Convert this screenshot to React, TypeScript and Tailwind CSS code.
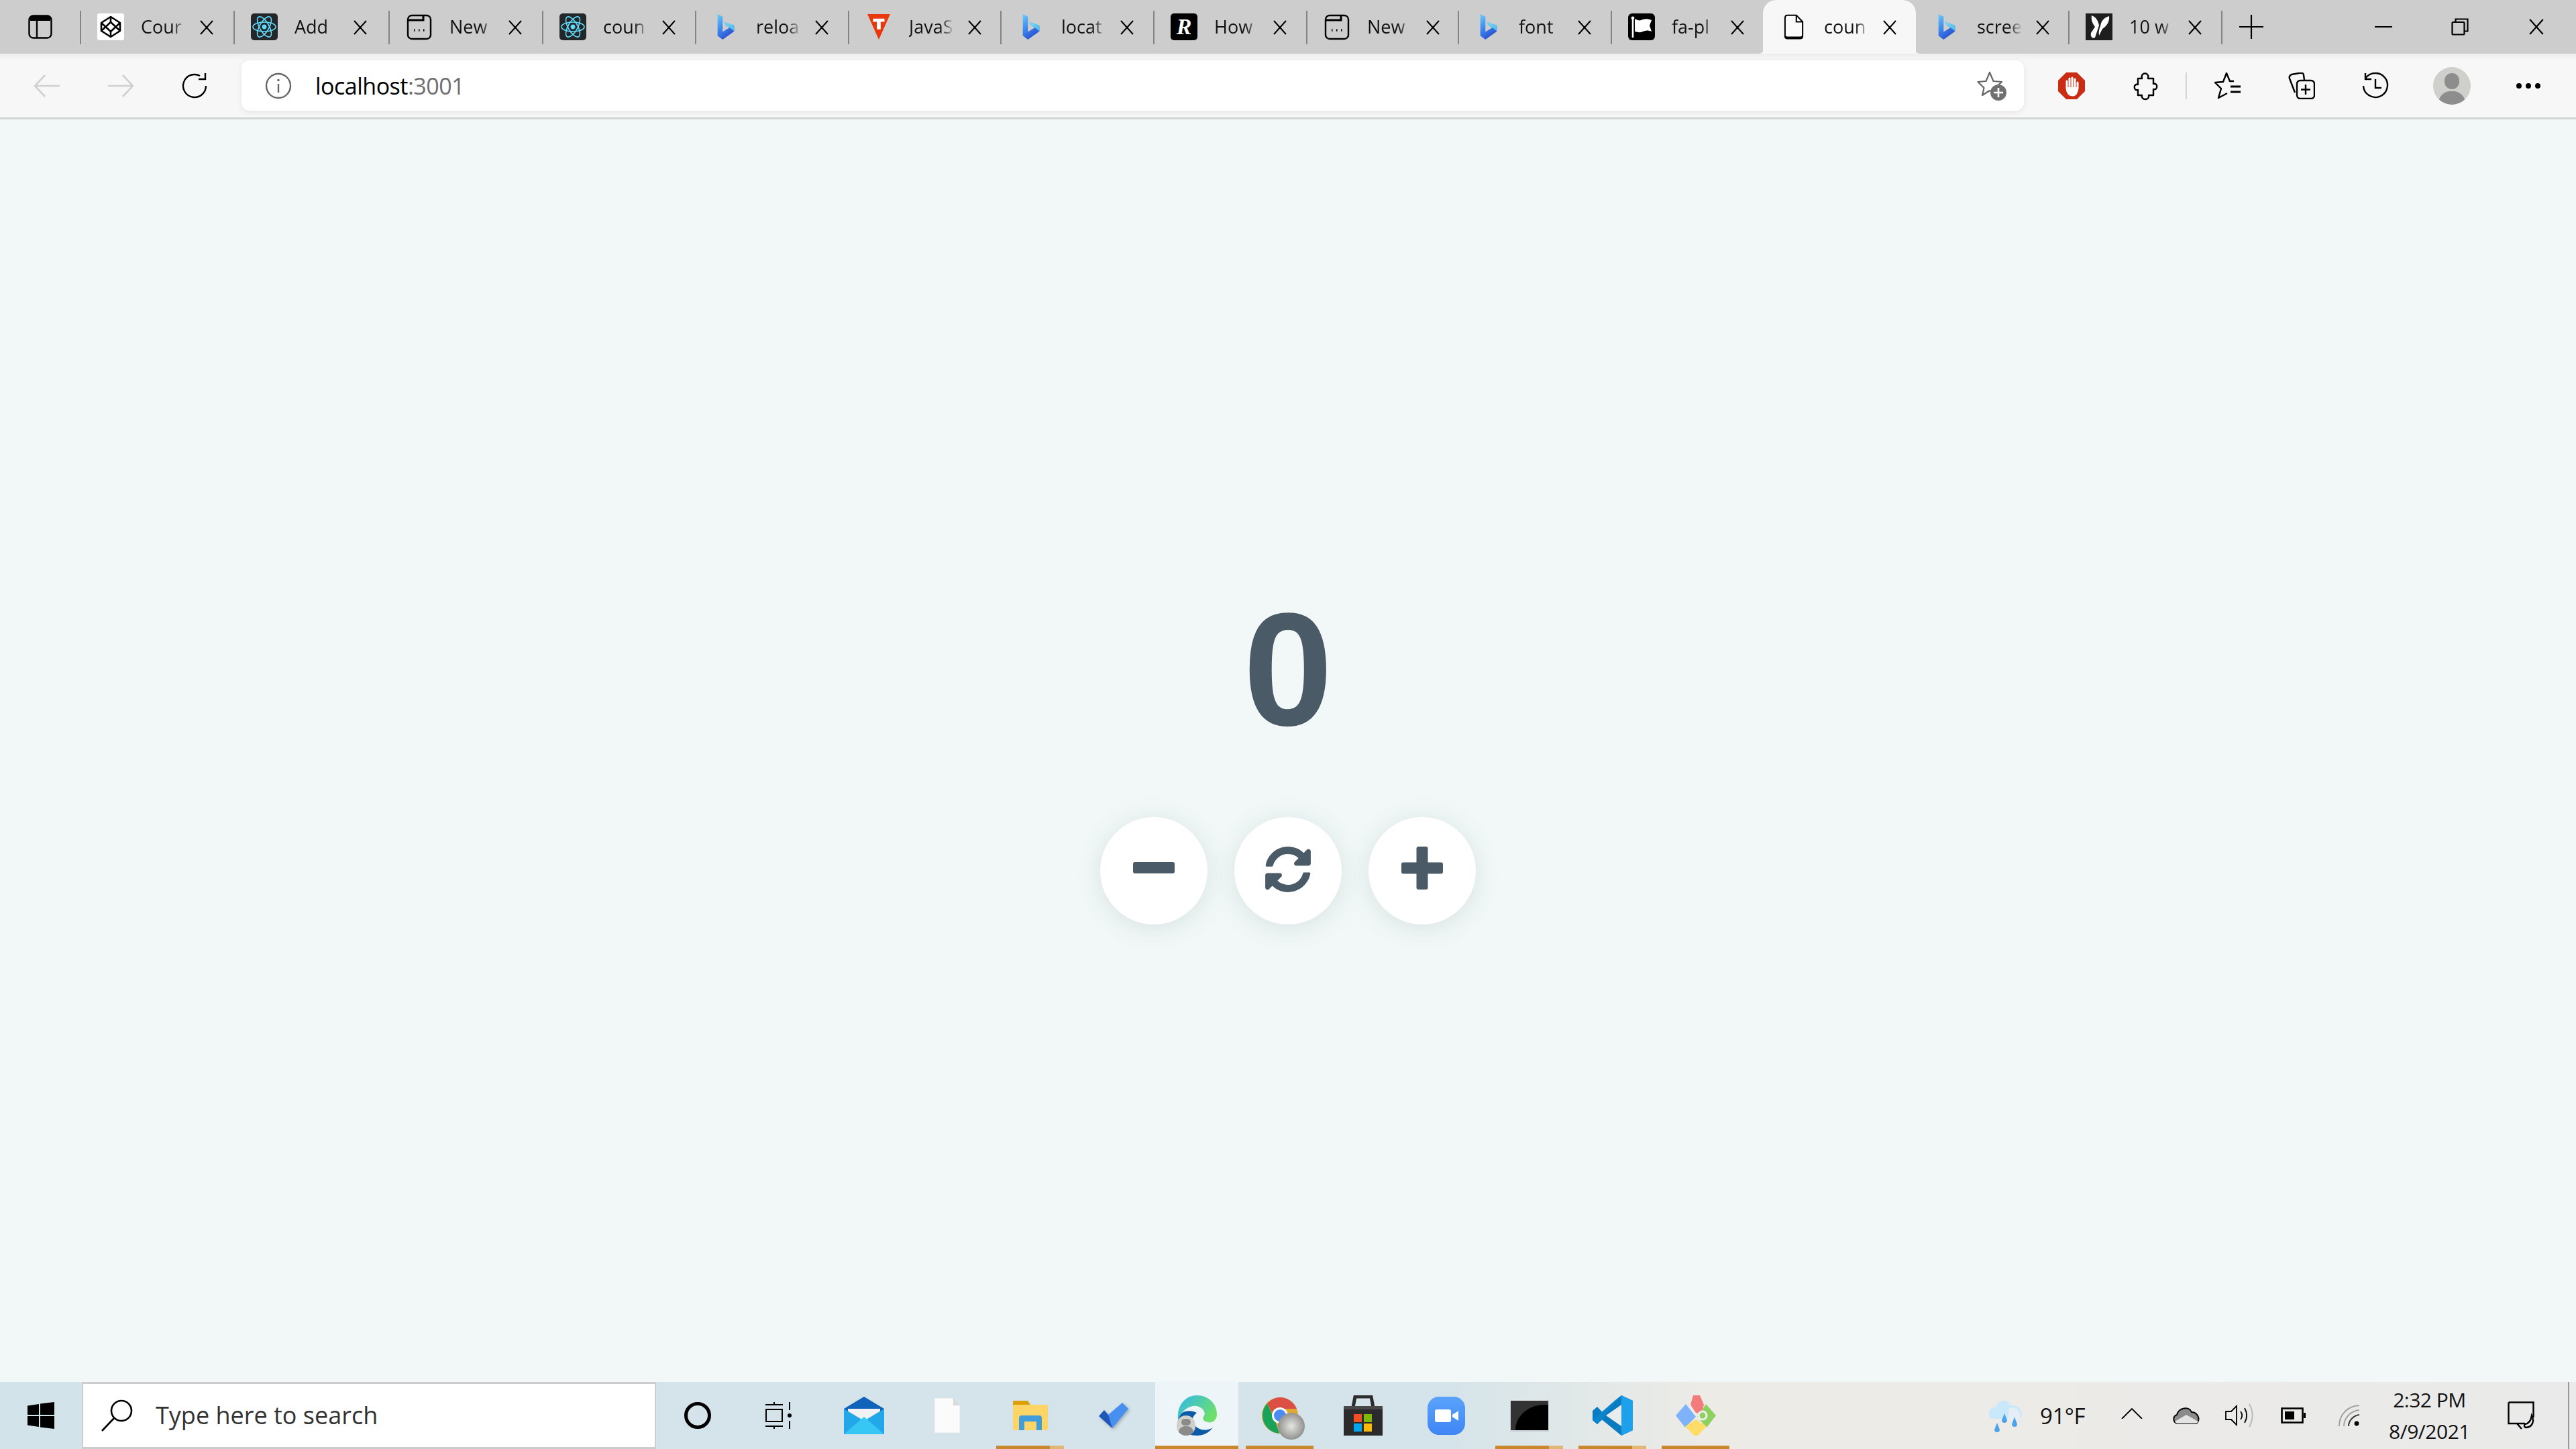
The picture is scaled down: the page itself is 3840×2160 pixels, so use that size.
import { ReactNode } from 'react';
import { FaSyncAlt } from 'react-icons/fa';

const uiFont = "font-['Open_Sans',sans-serif]";

const Bing = () => (
  <svg viewBox="0 0 28 40" className="w-[28px] h-[38px] mx-[6px]">
    <defs>
      <linearGradient id="bing" x1="0" y1="0" x2="0.5" y2="1">
        <stop offset="0" stopColor="#6fcdf7" />
        <stop offset="0.5" stopColor="#3f8bee" />
        <stop offset="1" stopColor="#2a4fd0" />
      </linearGradient>
      <linearGradient id="bingLobe" x1="0" y1="0" x2="1" y2="1">
        <stop offset="0" stopColor="#7fdcf2" />
        <stop offset="1" stopColor="#49b8ec" />
      </linearGradient>
    </defs>
    <path d="M1 0 L9 4 V28 L20 21 L14 18 L11 12 L27 18 V27 L9 40 L1 34 Z" fill="url(#bing)" />
    <path d="M11 12 L27 18 V27 L20 21 L14 18 Z" fill="url(#bingLobe)" />
  </svg>
);

const ReactIcon = () => (
  <svg viewBox="0 0 40 40" className="w-10 h-10">
    <rect width="40" height="40" rx="5" fill="#23272a" />
    <g fill="none" stroke="#61dafb" strokeWidth="1.6">
      <ellipse cx="20" cy="20" rx="17" ry="7" />
      <ellipse cx="20" cy="20" rx="17" ry="7" transform="rotate(60 20 20)" />
      <ellipse cx="20" cy="20" rx="17" ry="7" transform="rotate(120 20 20)" />
    </g>
    <circle cx="20" cy="20" r="3.4" fill="#61dafb" />
  </svg>
);

const Codepen = () => (
  <svg viewBox="0 0 40 40" className="w-10 h-10">
    <rect width="40" height="40" rx="3" fill="#fff" />
    <g fill="none" stroke="#000" strokeWidth="2.6" strokeLinejoin="round">
      <path d="M20 5 L34 14 V26 L20 35 L6 26 V14 Z" />
      <path d="M20 5 V13 M20 27 V35 M6 14 L20 27 L34 14 M6 26 L20 13 L34 26" />
    </g>
  </svg>
);

const NewTabIcon = () => (
  <svg viewBox="0 0 40 40" className="w-10 h-10" fill="none" stroke="#000" strokeWidth="2.4">
    <rect x="3" y="3" width="34" height="35" rx="6" />
    <path d="M3 10 H26 V3" strokeWidth="3" />
    <path d="M12 25 H13.5 M19 25 H20.5 M26 25 H27.5" strokeWidth="3.4" />
  </svg>
);

const VueSchool = () => (
  <svg viewBox="0 0 36 40" className="w-[34px] h-10 mx-[3px]">
    <path d="M0 0 H36 L18 40 Z" fill="#e8390e" />
    <path d="M9 7 H27 V12 H21 V24 H15 V12 H9 Z" fill="#fff" />
  </svg>
);

const RIcon = () => (
  <div className="w-10 h-10 bg-black rounded-[5px] flex items-center justify-center text-white text-[34px] leading-none italic font-bold font-['Liberation_Serif',serif]">
    R
  </div>
);

const FlagIcon = () => (
  <svg viewBox="0 0 40 40" className="w-10 h-10">
    <rect width="40" height="40" rx="6" fill="#000" />
    <path d="M7 9 V36" stroke="#fff" strokeWidth="2.6" />
    <circle cx="7" cy="7" r="2.4" fill="#fff" />
    <path d="M10 8 C15 11 18 11 22 9 C26 8 30 8 35 10 L32 18 L35 27 C30 25 26 25 22 27 C18 29 14 28 10 27 Z" fill="#fff" />
  </svg>
);

const PageIcon = () => (
  <svg viewBox="0 0 32 40" className="w-[30px] h-10 mx-[5px]" fill="none" stroke="#000" strokeWidth="2.2">
    <path d="M6 1.5 H20 L30 12 V34 C30 37 28 38.5 26 38.5 H6 C3.5 38.5 2 37 2 34 V6 C2 3 3.5 1.5 6 1.5 Z" fill="#fafafa" />
    <path d="M20 1.5 V12 H30" />
    <path d="M2 35 C3 37 4 37 6 37 H26 C28 37 29 37 30 35" strokeWidth="3" />
  </svg>
);

const DarkLeaf = () => (
  <svg viewBox="0 0 40 40" className="w-10 h-10">
    <rect width="40" height="40" fill="#1e1e1e" />
    <path d="M9 3 C15 5 19 11 20 18 L14 36 C10 38 7 35 8 29 L14 20 C10 15 8 9 9 3 Z" fill="#fff" />
    <path d="M22 19 C23 11 28 6 35 4 C36 11 32 19 25 23 L20 33 C19 28 20 23 22 19 Z" fill="#fff" />
  </svg>
);

const tabs: { title: string; w: string; icon: ReactNode; active?: boolean; hideSep?: boolean }[] = [
  { title: 'Cour', w: 'w-[229px]', icon: <Codepen /> },
  { title: 'Add', w: 'w-[231px]', icon: <ReactIcon /> },
  { title: 'New', w: 'w-[229px]', icon: <NewTabIcon /> },
  { title: 'coun', w: 'w-[228px]', icon: <ReactIcon /> },
  { title: 'reloa', w: 'w-[228px]', icon: <Bing /> },
  { title: 'JavaS', w: 'w-[227px]', icon: <VueSchool /> },
  { title: 'locat', w: 'w-[228px]', icon: <Bing /> },
  { title: 'How', w: 'w-[228px]', icon: <RIcon /> },
  { title: 'New', w: 'w-[226px]', icon: <NewTabIcon /> },
  { title: 'font', w: 'w-[228px]', icon: <Bing /> },
  { title: 'fa-pl', w: 'w-[227px]', icon: <FlagIcon /> },
  { title: 'coun', w: 'w-[228px]', icon: <PageIcon />, active: true },
  { title: 'scree', w: 'w-[227px]', icon: <Bing />, hideSep: true },
  { title: '10 w', w: 'w-[228px]', icon: <DarkLeaf /> },
];

const CloseX = ({ size = 22 }: { size?: number }) => (
  <svg viewBox="0 0 22 22" width={size} height={size} fill="none" stroke="#000" strokeWidth="2">
    <path d="M2 1 L20 21 M20 1 L2 21" />
  </svg>
);

const Tab = ({ title, w, icon, active, hideSep }: (typeof tabs)[number]) => (
  <div
    className={`relative ${w} h-full flex items-center shrink-0 ${
      active ? 'bg-[#f7f7f7] rounded-t-[20px]' : ''
    }`}
  >
    {active && (
      <>
        <svg viewBox="0 0 8 8" className="absolute left-[-6px] bottom-0 w-[8px] h-[8px]">
          <path d="M8 0 V8 H0 C4 8 7 5 8 0 Z" fill="#f7f7f7" />
        </svg>
        <svg viewBox="0 0 8 8" className="absolute right-[-6px] bottom-0 w-[8px] h-[8px]">
          <path d="M0 0 V8 H8 C4 8 1 5 0 0 Z" fill="#f7f7f7" />
        </svg>
      </>
    )}
    <div className={`w-[2px] h-[50px] mt-[2px] bg-[#848484] ${active || hideSep ? 'invisible' : ''}`} />
    <div className="ml-[24px] w-10 h-10 flex items-center justify-center shrink-0">{icon}</div>
    <span
      className={`ml-[25px] w-[68px] shrink-0 whitespace-nowrap text-[27px] leading-[34px] text-[#111] [mask-image:linear-gradient(to_right,black_68%,transparent)] ${uiFont}`}
    >
      {title}
    </span>
    <div className="ml-[19px] mt-[2px]">
      <CloseX />
    </div>
  </div>
);

const ToolCell = ({ children }: { children: ReactNode }) => (
  <div className="w-[110px] h-full flex items-center justify-center shrink-0">{children}</div>
);

const ArrowIcon = ({ flip }: { flip?: boolean }) => (
  <svg viewBox="0 0 42 36" className={`w-[42px] h-[36px] ${flip ? 'rotate-180' : ''}`} fill="none" stroke="#d0d0d0" strokeWidth="2.6">
    <path d="M40 18 H3 M18 2 L3 18 L18 34" />
  </svg>
);

const Browser = () => (
  <>
    <div className="h-20 bg-[#cdcdcd] flex items-center shrink-0">
      <div className="w-[119px] h-full flex items-center justify-center shrink-0">
        <svg viewBox="0 0 36 36" className="w-[36px] h-[36px]" fill="none" stroke="#000" strokeWidth="2.4">
          <rect x="1.5" y="1.5" width="33" height="33" rx="6" />
          <path d="M3 6 C3 3 4 2 7 2 H29 C32 2 33 3 33 6 V9 H3 Z" fill="#000" stroke="none" />
          <path d="M13 9 V34" />
        </svg>
      </div>
      {tabs.map((t, i) => (
        <Tab key={i} {...t} />
      ))}
      <div className="w-[2px] h-[50px] mt-[2px] bg-[#848484]" />
      <svg viewBox="0 0 36 36" className="w-[36px] h-[36px] ml-[25px]" fill="none" stroke="#000" strokeWidth="2.2">
        <path d="M18 0 V36 M0 18 H36" />
      </svg>
      <div className="ml-auto flex items-center h-full">
        <div className="w-[114px] flex justify-center">
          <div className="w-[26px] h-[2px] bg-black" />
        </div>
        <div className="w-[114px] flex justify-center">
          <svg viewBox="0 0 26 26" className="w-[26px] h-[26px]" fill="none" stroke="#000" strokeWidth="2.2">
            <rect x="1.5" y="6" width="18" height="18.5" rx="1.5" />
            <path d="M6.5 6 V1.5 H24.5 V19.5 H19.5" />
          </svg>
        </div>
        <div className="w-[114px] flex justify-center mr-[2px]">
          <CloseX size={24} />
        </div>
      </div>
    </div>

    <div className="h-[95px] bg-[linear-gradient(to_bottom,#ededed,#f7f7f7_10px)] flex items-center pl-[15px] shrink-0">
      <ToolCell><ArrowIcon /></ToolCell>
      <ToolCell><ArrowIcon flip /></ToolCell>
      <ToolCell>
        <svg viewBox="0 0 40 40" className="w-10 h-10" fill="none" stroke="#000" strokeWidth="2.4">
          <path d="M28 5 A17 17 0 1 0 37 20" />
          <path d="M36 1 V10 H26" />
        </svg>
      </ToolCell>
      <div className="ml-[15px] w-[2657px] h-[75px] bg-white rounded-[12px] shadow-[0_2px_8px_rgba(0,0,0,0.08)] flex items-center pl-[35px] pr-[26px] shrink-0">
        <svg viewBox="0 0 40 40" className="w-10 h-10" fill="none" stroke="#666" strokeWidth="2.4">
          <circle cx="20" cy="20" r="18" />
          <path d="M20 17 V30" />
          <circle cx="20" cy="11.5" r="1.8" fill="#666" stroke="none" />
        </svg>
        <span className={`ml-[35px] text-[34px] leading-none text-black tracking-[-0.5px] ${uiFont}`}>
          localhost<span className="text-[#6e6e6e]">:3001</span>
        </span>
        <svg viewBox="0 0 44 44" className="w-[44px] h-[44px] ml-auto" fill="none">
          <path d="M19 2 L24.5 15 L37 16 L28 24.5 L30 34 L19 29 L8 36 L10.5 25 L1.5 16 L13.5 15 Z" stroke="#666" strokeWidth="2.2" strokeLinejoin="round" />
          <circle cx="32" cy="32" r="12" fill="#707070" />
          <path d="M32 25 V39 M25 32 H39" stroke="#fff" strokeWidth="2.6" />
        </svg>
      </div>
      <div className="ml-[16px] flex items-center h-full">
        <ToolCell>
          <svg viewBox="0 0 40 40" className="w-10 h-10">
            <path d="M12 0 H28 L40 12 V28 L28 40 H12 L0 28 V12 Z" fill="#c92c12" />
            <path d="M13 24 V13 M17 21 V9 M21 21 V8 M25 21 V10 M29 24 V15 M13 24 C14 32 18 34 22 34 C26 34 28 30 29 24" stroke="#fff" strokeWidth="3" fill="none" strokeLinecap="round" />
            <path d="M14 22 H28 L27 31 C24 34 18 34 16 31 Z" fill="#fff" />
          </svg>
        </ToolCell>
        <ToolCell>
          <svg viewBox="0 0 38 44" className="w-[38px] h-[44px]" fill="none" stroke="#000" strokeWidth="2.4" strokeLinejoin="round">
            <path d="M8 11 H14 C11 1 26 1 23 11 H31 V19 C38 17 38 29 31 27 V36 H24 C26 44 12 44 14 36 H8 V28 C1 30 1 18 8 20 Z" />
          </svg>
        </ToolCell>
        <div className="w-[2px] h-10 bg-[#d3d3d3] ml-[5px] mr-[6px]" />
        <ToolCell>
          <svg viewBox="0 0 42 40" className="w-[42px] h-10" fill="none" stroke="#000" strokeWidth="2.4" strokeLinejoin="round">
            <path d="M30 13 L24 13 L19 1 L14 14 L2 15 L11 24 L7 38 L20 31" />
            <path d="M25 21 H40 M25 29 H40" strokeWidth="2.8" />
          </svg>
        </ToolCell>
        <ToolCell>
          <svg viewBox="0 0 40 40" className="w-10 h-10" fill="none" stroke="#000" strokeWidth="2.4" strokeLinejoin="round">
            <path d="M10 30 L2 9 C1 6 3 4 5 3 L19 0.5 C21 0.5 23 2 23 4 L24 11" />
            <rect x="13" y="12" width="26" height="27" rx="5" fill="#f7f7f7" />
            <path d="M26 18 V33 M19 25.5 H33" />
          </svg>
        </ToolCell>
        <ToolCell>
          <svg viewBox="0 0 40 40" className="w-10 h-10" fill="none" stroke="#000" strokeWidth="2.4">
            <path d="M5 9 A18 18 0 1 1 2 20" />
            <path d="M5 1 V10 H14" />
            <path d="M20 10 V23 H29" />
          </svg>
        </ToolCell>
        <div className="w-[116px] flex justify-center shrink-0 pl-[2px]">
          <div className="w-[56px] h-[56px] rounded-full bg-[#cfcfcb] overflow-hidden relative">
            <div className="absolute left-[17px] top-[9px] w-[22px] h-[24px] rounded-full bg-[#8d8d8d]" />
            <div className="absolute left-[8px] top-[36px] w-[40px] h-[36px] rounded-full bg-[#8d8d8d]" />
          </div>
        </div>
        <div className="w-[110px] flex justify-center gap-[6px] shrink-0 pl-[3px]">
          <div className="w-[8px] h-[8px] rounded-full bg-black" />
          <div className="w-[8px] h-[8px] rounded-full bg-black" />
          <div className="w-[8px] h-[8px] rounded-full bg-black" />
        </div>
      </div>
    </div>
    <div className="h-[3px] bg-[#d2d5d5] shrink-0" />
  </>
);

const CountButton = ({ children }: { children: ReactNode }) => (
  <button className="w-40 h-40 rounded-full bg-white text-[#4a5a66] flex items-center justify-center pb-[5px] shadow-[0_5px_38px_rgba(74,90,102,0.14)]">
    {children}
  </button>
);

const Counter = () => (
  <main className="flex-1 bg-[#f2f8f8] flex flex-col items-center justify-center pb-[6px]">
    <h1 className="text-[240px] leading-[288px] font-bold text-[#4a5a66] font-['Liberation_Sans',sans-serif]">0</h1>
    <div className="mt-[76px] flex gap-10">
      <CountButton>
        <svg viewBox="0 0 62 17" className="w-[62px] h-[17px] mb-[4px]">
          <rect width="62" height="17" rx="3" fill="currentColor" />
        </svg>
      </CountButton>
      <CountButton><FaSyncAlt size={70} /></CountButton>
      <CountButton>
        <svg viewBox="0 0 62 64" className="w-[62px] h-[64px] mb-[4px]" fill="currentColor">
          <rect y="23.5" width="62" height="17" rx="3" />
          <rect x="22.5" width="17" height="64" rx="3" />
        </svg>
      </CountButton>
    </div>
  </main>
);

const Avatar = ({ cls }: { cls: string }) => (
  <div className={`absolute rounded-full bg-[#cfcfcb] overflow-hidden ${cls}`}>
    <div className="mx-auto mt-[18%] w-1/2 h-[32%] rounded-full bg-[#8b8b8b]" />
    <div className="mx-auto mt-[6%] w-[76%] h-[60%] rounded-full bg-[#8b8b8b]" />
  </div>
);

const taskbarIcons: { node: ReactNode; run?: boolean; focus?: boolean; stacked?: boolean }[] = [
  {
    node: <div className="w-10 h-10 rounded-full border-[5px] border-black" />,
  },
  {
    node: (
      <svg viewBox="0 0 40 40" className="w-10 h-10 mr-[6px]" fill="none" stroke="#000" strokeWidth="2">
        <path d="M0 4 H26 M0 36 H26 M13 0 V4 M13 36 V40" />
        <rect x="1" y="11" width="24" height="18" />
        <path d="M36 0 V12 M36 28 V40" strokeWidth="2" />
        <circle cx="36" cy="20" r="3" fill="#000" stroke="none" />
      </svg>
    ),
  },
  {
    node: (
      <svg viewBox="0 0 60 56" className="w-[60px] h-[56px]">
        <path d="M0 18 L30 0 L60 18 V56 H0 Z" fill="#0f63b8" />
        <path d="M6 18 H54 V30 L30 42 L6 30 Z" fill="#f2f2f2" />
        <path d="M0 18 L30 36 L60 18 V56 H0 Z" fill="#22a8e8" />
        <path d="M0 56 L30 30 L60 56 Z" fill="#38c6f4" />
      </svg>
    ),
  },
  {
    node: (
      <svg viewBox="0 0 38 52" className="w-[38px] h-[52px]">
        <path d="M0 0 H28 L38 11 V52 H0 Z" fill="#fbfbfb" stroke="#e4e6e6" />
        <path d="M28 0 L38 11 H28 Z" fill="#d9d9d9" />
      </svg>
    ),
  },
  {
    node: (
      <svg viewBox="0 0 52 44" className="w-[52px] h-[44px]">
        <path d="M0 2 Q0 0 2 0 H22 L26 6 L22 12 H0 Z" fill="#dba006" />
        <rect y="6" width="52" height="38" rx="2" fill="#fdd567" />
        <path d="M9 44 V26 Q9 22 13 22 H39 Q43 22 43 26 V44 H35 V31 H17 V44 Z" fill="#3f9ddc" />
      </svg>
    ),
    run: true,
    stacked: true,
  },
  {
    node: (
      <svg viewBox="0 0 44 38" className="w-[44px] h-[38px] drop-shadow-[2px_2px_2px_rgba(60,70,80,0.35)]">
        <path d="M0 20 L8 11 L19 24 L20 38 Z" fill="#1f56b8" />
        <path d="M20 38 L14 18 L35 0 L44 9 Z" fill="#478ff0" />
      </svg>
    ),
  },
  {
    node: (
      <div className="relative w-[60px] h-[60px]">
        <svg viewBox="0 0 60 60" className="w-[60px] h-[60px]">
          <defs>
            <linearGradient id="edgeTop" x1="0" y1="0" x2="1" y2="0.6">
              <stop offset="0" stopColor="#2fb7ee" />
              <stop offset="1" stopColor="#6fe06a" />
            </linearGradient>
          </defs>
          <path d="M2 36 C2 50 14 60 30 60 C40 60 48 56 54 48 C44 54 34 52 28 46 C22 40 22 32 30 26 C18 20 4 24 2 36 Z" fill="#0d5aa7" />
          <path d="M30 0 C48 0 60 13 60 28 C60 38 52 42 46 40 C40 38 38 36 40 32 C43 28 42 24 38 20 C30 12 12 14 2 36 C0 14 14 0 30 0 Z" fill="url(#edgeTop)" />
        </svg>
        <Avatar cls="left-0 top-[30px] w-[28px] h-[30px]" />
      </div>
    ),
    run: true,
    focus: true,
  },
  {
    node: (
      <div className="relative w-[54px] h-[56px]">
        <svg viewBox="0 0 54 56" className="w-[54px] h-[56px]">
          <circle cx="27" cy="28" r="27" fill="#e0a82e" />
          <path d="M27 1 A27 27 0 0 1 52 18 H27 A10 10 0 0 0 17 27 L8 10 A27 27 0 0 1 27 1 Z" fill="#db4f45" />
          <path d="M8 10 L20 36 L26 55 A27 27 0 0 1 8 10 Z" fill="#18a25a" />
          <circle cx="27" cy="28" r="12" fill="#fff" />
          <circle cx="27" cy="28" r="9" fill="#4b8bf5" />
        </svg>
        <div className="absolute left-[24px] top-[24px] w-[40px] h-[40px] rounded-full bg-[radial-gradient(circle,#e6e6e2,#6f6f6f)]" />
      </div>
    ),
    run: true,
  },
  {
    node: (
      <svg viewBox="0 0 58 60" className="w-[58px] h-[60px]">
        <path d="M14 18 L17 2 H41 L44 18" fill="none" stroke="#2c2c2c" strokeWidth="5" />
        <rect y="16" width="58" height="44" fill="#2b2b2b" />
        <rect y="16" width="58" height="5" fill="#484848" />
        <rect x="15" y="28" width="12" height="12" fill="#f25022" />
        <rect x="30" y="28" width="12" height="12" fill="#7fba00" />
        <rect x="15" y="42" width="12" height="12" fill="#00a4ef" />
        <rect x="30" y="42" width="12" height="12" fill="#ffb900" />
      </svg>
    ),
  },
  {
    node: (
      <div className="w-[56px] h-[57px] rounded-[17px] bg-[linear-gradient(to_bottom,#5aa3fb,#3e85f5)] flex items-center justify-center gap-[2px]">
        <div className="w-[24px] h-[19px] bg-white rounded-[3px]" />
        <svg viewBox="0 0 10 16" className="w-[9px] h-[15px]">
          <path d="M0 6 L10 0 V16 L0 10 Z" fill="#fff" />
        </svg>
      </div>
    ),
  },
  {
    node: (
      <div className="w-[58px] h-[50px] bg-black border-x-[1px] border-[#cfd8de] flex flex-col">
        <div className="h-[3px] bg-[#e3e7ea]" />
        <div className="flex-1 bg-[radial-gradient(ellipse_at_90%_100%,#000_60%,#333_62%)]" />
        <div className="h-[3px] bg-[#cfd8de]" />
      </div>
    ),
    run: true,
    stacked: true,
  },
  {
    node: (
      <svg viewBox="0 0 60 60" className="w-[60px] h-[60px]">
        <path d="M43 0 L60 8 V52 L43 60 L10 33 L20 24 Z" fill="#0a7bc0" />
        <path d="M43 0 L60 8 V52 L43 60 Z" fill="#1da1ea" />
        <path d="M43 14 V46 L20 30 Z" fill="#e9ecec" />
        <path d="M7 17 L0 23 V37 L7 43 L20 31 Z" fill="#0a7bc0" />
        <path d="M43 0 L7 43 L0 37 L34 7 Z" fill="#0a84cc" />
      </svg>
    ),
    run: true,
    stacked: true,
  },
  {
    node: (
      <svg viewBox="0 0 60 60" className="w-[60px] h-[60px]">
        <path d="M26 0 L36 0 L42 14 L38 28 L30 26 L22 14 Z" fill="#f47b7b" />
        <path d="M15 13 L30 32 L14 48 L0 30 Z" fill="#7fb2fb" />
        <path d="M45 13 L60 30 L46 48 L32 32 Z" fill="#8fd160" />
        <circle cx="40" cy="30" r="6" fill="none" stroke="#eef0ec" strokeWidth="3" />
        <path d="M14 46 L30 36 L46 46 L33 60 H27 Z" fill="#fddc6a" />
      </svg>
    ),
    run: true,
  },
];

const TaskIcon = ({ node, run, focus, stacked }: (typeof taskbarIcons)[number]) => (
  <div className={`relative w-[124px] h-full flex items-center justify-center shrink-0 ${focus ? 'bg-[#eef5f8]' : ''}`}>
    {node}
    {run && (
      <div className={`absolute bottom-0 h-[5px] ${focus ? 'left-0 right-0' : 'left-[11px] w-[101px]'} bg-[#c9882c] flex justify-end`}>
        {stacked && <div className="w-[21px] bg-[#dfb778]" />}
      </div>
    )}
  </div>
);

const Taskbar = () => (
  <div className="h-[100px] flex items-stretch shrink-0 bg-[linear-gradient(to_right,#d3e3ea_0%,#d5e4ea_56%,#ecebe6_66%,#eaeaea_100%)]">
    <div className="w-[122px] flex items-center justify-center shrink-0">
      <svg viewBox="0 0 40 40" className="w-10 h-10">
        <path d="M0 5.5 L17 3 V19 H0 Z M19 2.6 L40 0 V19 H19 Z M0 21 H17 V37 L0 34.5 Z M19 21 H40 V40 L19 37.4 Z" fill="#000" />
      </svg>
    </div>
    <div className="w-[856px] bg-white border-[3px] border-[#cdcdcd] border-x-[2px] flex items-center pl-[26px] shrink-0">
      <svg viewBox="0 0 50 48" className="w-[50px] h-[48px]" fill="none" stroke="#000" strokeWidth="2.6">
        <circle cx="31" cy="17" r="15" />
        <path d="M20 28 L2 47" />
      </svg>
      <span className={`ml-[32px] text-[36px] leading-none text-[#333] ${uiFont}`}>Type here to search</span>
    </div>
    {taskbarIcons.map((t, i) => (
      <TaskIcon key={i} {...t} />
    ))}
    <div className={`ml-auto flex items-center h-full text-[#111] ${uiFont}`}>
      <svg viewBox="0 0 54 50" className="w-[54px] h-[50px]">
        <path d="M6 30 C-2 24 2 12 12 13 C14 2 30 -2 34 10 C46 8 56 20 48 30 Z" fill="#c9e8f9" />
        <path d="M32 14 C42 10 54 22 46 32 H30 Z" fill="#e4eef4" />
        <path d="M25 22 L29 32 A4 4 0 0 1 21 32 Z M40 27 L44 38 A4 4 0 0 1 36 38 Z M14 36 L18 46 A4 4 0 0 1 10 46 Z" fill="#4ea4ea" />
      </svg>
      <span className="ml-[24px] text-[33px] leading-none tracking-[-0.5px]">91°F</span>
      <svg viewBox="0 0 32 16" className="ml-[54px] w-[32px] h-[16px] mb-[6px]" fill="none" stroke="#000" strokeWidth="1.8">
        <path d="M1 16 L16 1 L31 16" />
      </svg>
      <svg viewBox="0 0 40 28" className="ml-[45px] w-10 h-[28px]">
        <path d="M8 26 C0 26 -1 15 6 13 C8 3 24 -1 28 9 C36 9 41 18 37 24 C36 26 34 26 32 26 Z" fill="#8b8b8b" stroke="#000" strokeWidth="2" />
        <path d="M3 23 L20 13 L38 23 C37 25 35 26 33 26 H8 C6 26 4 25 3 23 Z" fill="#e3e3e3" />
      </svg>
      <svg viewBox="0 0 42 36" className="ml-[38px] w-[42px] h-[36px]" fill="none" stroke="#000" strokeWidth="1.8">
        <path d="M1 12 H9 L17 4 V32 L9 24 H1 Z" />
        <path d="M23 12 C26 16 26 20 23 24" />
        <path d="M29 7 C33 14 33 22 29 29" />
        <path d="M36 1 C42 12 42 24 36 35" stroke="#b5b5b5" />
      </svg>
      <svg viewBox="0 0 38 24" className="ml-[41px] w-[38px] h-[24px]">
        <rect x="1.5" y="1.5" width="31" height="21" fill="none" stroke="#000" strokeWidth="2.6" />
        <rect x="6" y="6" width="14" height="12" fill="#000" />
        <rect x="34" y="8" width="3" height="8" fill="#000" />
      </svg>
      <svg viewBox="0 0 32 32" className="ml-[48px] w-[32px] h-[32px]" fill="none" stroke="#a0a0a0" strokeWidth="2">
        <path d="M1 32 C1 14 14 2 31 1" />
        <path d="M8 32 C8 20 18 9 31 8" />
        <path d="M15 32 C15 24 22 16 31 15" stroke="#333" />
        <circle cx="27" cy="28" r="3.4" fill="#000" stroke="none" />
      </svg>
      <div className="ml-[43px] w-[121px] flex flex-col items-center gap-[18px] text-[30px] leading-[29px] tracking-[-0.5px] whitespace-nowrap">
        <span>2:32 PM</span>
        <span>8/9/2021</span>
      </div>
      <svg viewBox="0 0 40 42" className="ml-[56px] w-10 h-[42px]" fill="none" stroke="#000" strokeWidth="2.4">
        <path d="M1.5 1.5 H38.5 V24 M26 33 H1.5 V1.5 M14 33 L21 41" />
        <path d="M36 21 C40 28 38 38 28 39 C25 39 24 36 26 34 C32 33 35 28 36 21 Z" />
      </svg>
      <div className="ml-[50px] w-[2px] h-full bg-[#9a9a9a]" />
      <div className="w-[10px]" />
    </div>
  </div>
);

export default function App() {
  return (
    <div className="w-[3840px] h-[2160px] flex flex-col overflow-hidden">
      <Browser />
      <Counter />
      <Taskbar />
    </div>
  );
}
